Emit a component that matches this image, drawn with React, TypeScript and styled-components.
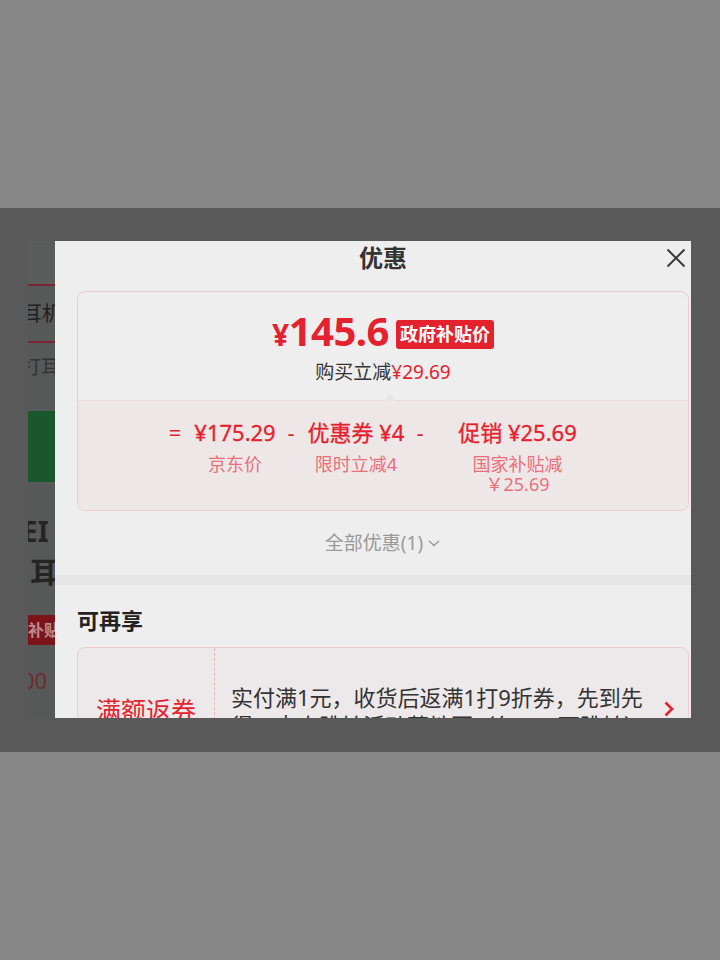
import React from "react";
import styled, { createGlobalStyle } from "styled-components";

const GlobalStyle = createGlobalStyle`
  html, body {
    margin: 0;
    padding: 0;
  }
  body {
    background: #878787;
    font-family: "Noto Sans", "Noto Sans CJK SC", sans-serif;
  }
`;

const red = "#e4222e";
const softRed = "#e8707a";
const pinkLine = "#efcbd0";

// outer grey canvas with the dimmed phone screen band
const Page = styled.div`
  width: 720px;
  height: 960px;
  padding-top: 208px;
  box-sizing: border-box;
`;

const Stage = styled.div`
  height: 544px;
  background: #595959;
  padding: 33px 29px 34px 28px;
  box-sizing: border-box;
`;

const Screen = styled.div`
  position: relative;
  height: 477px;
  overflow: hidden;
  background: #575858;
`;

/* ---------- product page behind the sheet (dimmed) ---------- */

const BackPage = styled.div`
  display: flex;
  flex-direction: column;
  height: 100%;
`;

const BackHeader = styled.div`
  height: 43px;
  background: #5b5d5c;
`;

const BackRule = styled.div<{ $top?: number }>`
  margin-top: ${(p) => p.$top ?? 0}px;
  height: 2px;
  width: 40px;
  background: #7d2230;
`;

const BackLine = styled.div<{ $top: number; $size: number; $color: string; $bold?: boolean }>`
  margin-top: ${(p) => p.$top}px;
  margin-left: -6px;
  font-size: ${(p) => p.$size}px;
  line-height: ${(p) => p.$size + 4}px;
  font-weight: ${(p) => (p.$bold ? 700 : 400)};
  color: ${(p) => p.$color};
  white-space: nowrap;
`;

const BackBanner = styled.div`
  margin-top: 32px;
  height: 71px;
  background: #1b572c;
`;

const BackBadge = styled.div`
  margin-top: 27px;
  width: 40px;
  height: 30px;
  background: #7a1419;
  color: #b88a8c;
  font-size: 16px;
  font-weight: 700;
  line-height: 30px;
  white-space: nowrap;
`;

/* ---------- discount sheet ---------- */

const Sheet = styled.div`
  position: absolute;
  top: 0;
  left: 27px;
  width: 656px;
  height: 477px;
  background: #eeeeee;
  padding: 0 22px;
  box-sizing: border-box;
  overflow: hidden;
`;

const SheetHeader = styled.div`
  position: relative;
  height: 50px;
  text-align: center;
`;

const SheetTitle = styled.div`
  font-size: 24px;
  line-height: 34px;
  font-weight: 700;
  color: #333;
`;

const CloseButton = styled.button`
  position: absolute;
  top: 7px;
  right: 3px;
  width: 20px;
  height: 20px;
  padding: 0;
  border: 0;
  background: none;
  display: flex;
`;

const PriceCard = styled.div`
  border: 1px solid ${pinkLine};
  border-radius: 8px;
  overflow: hidden;
`;

const PriceTop = styled.div`
  padding: 19px 0 15px;
  display: flex;
  flex-direction: column;
  align-items: center;
`;

const PriceRow = styled.div`
  display: flex;
  align-items: center;
  height: 44px;
  gap: 7px;
`;

const BigPrice = styled.div`
  color: ${red};
  font-size: 40px;
  font-weight: 700;
  line-height: 44px;
  letter-spacing: -0.5px;
`;

const Yen = styled.span`
  font-size: 30px;
`;

const Badge = styled.div`
  background: ${red};
  color: #fff;
  font-size: 18px;
  font-weight: 700;
  line-height: 29px;
  padding: 0 4px;
  border-radius: 3px;
  margin-top: 2px;
`;

const SaveLine = styled.div`
  margin-top: 4px;
  font-size: 19px;
  line-height: 26px;
  color: #333;
`;

const RedText = styled.span`
  color: ${red};
`;

const PriceBottom = styled.div`
  position: relative;
  background: #eee7e8;
  border-top: 1px solid #f0d9dc;
  display: grid;
  grid-template-columns: 20px 100px 12px 118px 10px 185px;
  padding: 16px 0 16px 87px;
  align-items: start;

  &::before {
    content: "";
    position: absolute;
    top: -7px;
    left: 306px;
    border-left: 6px solid transparent;
    border-right: 6px solid transparent;
    border-bottom: 7px solid #ebe4e5;
  }
`;

const Operator = styled.div`
  color: ${red};
  font-size: 22px;
  line-height: 30px;
  text-align: center;
`;

const Term = styled.div`
  display: flex;
  flex-direction: column;
  align-items: center;
  text-align: center;
`;

const TermValue = styled.div`
  color: ${red};
  font-size: 22px;
  line-height: 30px;
  white-space: nowrap;
  -webkit-text-stroke: 0.3px ${red};
`;

const TermNote = styled.div`
  margin-top: 7px;
  max-width: 100px;
  color: ${softRed};
  font-size: 18px;
  line-height: 20px;
`;

const AllOffers = styled.div`
  display: flex;
  justify-content: center;
  align-items: center;
  gap: 4px;
  margin-top: 20px;
  padding-bottom: 20px;
  color: #999;
  font-size: 19px;
  line-height: 24px;
`;

const Divider = styled.div`
  height: 10px;
  margin: 0 -22px;
  background: #e5e5e5;
`;

const SectionTitle = styled.div`
  padding-top: 20px;
  font-size: 22px;
  line-height: 30px;
  font-weight: 700;
  color: #222;
`;

const Coupon = styled.div`
  margin-top: 12px;
  display: grid;
  grid-template-columns: 137px 1fr 30px;
  border: 1px solid ${pinkLine};
  border-radius: 8px;
  background: #ede8e9;
`;

const CouponKind = styled.div`
  align-self: stretch;
  display: flex;
  align-items: center;
  justify-content: center;
  padding-bottom: 4px;
  border-right: 1px dashed #e8b4bb;
  color: ${red};
  font-size: 25px;
`;

const CouponText = styled.div`
  padding: 35px 4px 35px 16px;
  color: #333;
  font-size: 22px;
  line-height: 28px;
`;

const CouponArrow = styled.div`
  display: flex;
  align-items: center;
  justify-content: center;
  padding: 0 8px 4px 0;
`;

const ChevronDown = () => (
  <svg width="14" height="10" viewBox="0 0 14 10">
    <path d="M2 3l5 4.5L12 3" fill="none" stroke="#999" strokeWidth="1.6" />
  </svg>
);

const App: React.FC = () => {
  return (
    <Page>
      <GlobalStyle />
      <Stage>
        <Screen>
          <BackPage>
            <BackHeader />
            <BackRule />
            <BackLine $top={16} $size={20} $color="#202020">
              耳机
            </BackLine>
            <BackRule $top={15} />
            <BackLine $top={13} $size={19} $color="#333">
              打耳
            </BackLine>
            <BackBanner />
            <BackLine $top={33} $size={28} $color="#242424" $bold>
              EI
            </BackLine>
            <BackLine $top={9} $size={28} $color="#242424" $bold>
              ,耳
            </BackLine>
            <BackBadge>补贴</BackBadge>
            <BackLine $top={22} $size={22} $color="#6e2b2f">
              00
            </BackLine>
          </BackPage>

          <Sheet>
            <SheetHeader>
              <SheetTitle>优惠</SheetTitle>
              <CloseButton aria-label="关闭">
                <svg width="20" height="20" viewBox="0 0 20 20">
                  <path d="M1.5 1.5l17 17M18.5 1.5l-17 17" stroke="#3a3a3a" strokeWidth="2" />
                </svg>
              </CloseButton>
            </SheetHeader>

            <PriceCard>
              <PriceTop>
                <PriceRow>
                  <BigPrice>
                    <Yen>¥</Yen>145.6
                  </BigPrice>
                  <Badge>政府补贴价</Badge>
                </PriceRow>
                <SaveLine>
                  购买立减<RedText>¥29.69</RedText>
                </SaveLine>
              </PriceTop>

              <PriceBottom>
                <Operator>=</Operator>
                <Term>
                  <TermValue>¥175.29</TermValue>
                  <TermNote>京东价</TermNote>
                </Term>
                <Operator>-</Operator>
                <Term>
                  <TermValue>优惠券 ¥4</TermValue>
                  <TermNote>限时立减4</TermNote>
                </Term>
                <Operator>-</Operator>
                <Term>
                  <TermValue>促销 ¥25.69</TermValue>
                  <TermNote>国家补贴减￥25.69</TermNote>
                </Term>
              </PriceBottom>
            </PriceCard>

            <AllOffers>
              全部优惠(1)
              <ChevronDown />
            </AllOffers>

            <Divider />

            <SectionTitle>可再享</SectionTitle>
            <Coupon>
              <CouponKind>满额返券</CouponKind>
              <CouponText>
                实付满1元，收货后返满1打9折券，先到先得，点击跳转活动落地页（仅APP可跳转）
              </CouponText>
              <CouponArrow>
                <svg width="12" height="18" viewBox="0 0 12 18">
                  <path d="M2.5 2.5l6.5 6.5-6.5 6.5" fill="none" stroke={red} strokeWidth="2.6" />
                </svg>
              </CouponArrow>
            </Coupon>
          </Sheet>
        </Screen>
      </Stage>
    </Page>
  );
};

export default App;
